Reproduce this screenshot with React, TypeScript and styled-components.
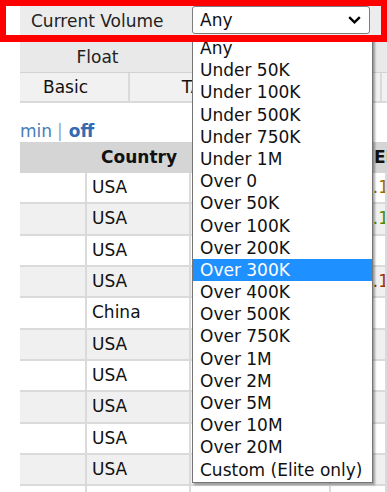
import React, { FunctionComponent } from 'react';
import styled, { createGlobalStyle } from 'styled-components';

const PageBody = createGlobalStyle`
  body {
    margin: 0;
    background: white;
    overflow: hidden;
    font-family: "DejaVu Sans", Verdana, sans-serif;
    font-size: 17px;
    color: #111;
  }
`;

const Page = styled.div`
    width: 387px;
    height: 492px;
    overflow: hidden;
`;

const TopBar = styled.div`
    position: relative;
    height: 42px;
    padding-left: 20px;
    box-sizing: border-box;
    &::after {
        content: '';
        position: absolute;
        inset: 0;
        border: 6px solid #ff0000;
        border-width: 6px 6px 7px 6px;
        pointer-events: none;
        z-index: 3;
    }
`;
const FilterRow = styled.div`
    display: flex;
    align-items: flex-start;
    height: 100%;
    background: #ececec;
`;
const Label = styled.div`
    width: 172px;
    box-sizing: border-box;
    padding-left: 11px;
    line-height: 42px;
    color: #222;
    white-space: nowrap;
`;
const SelectWrap = styled.div`
    position: relative;
    margin-top: 6px;
    width: 178px;
`;
const SelectBox = styled.div`
    height: 28px;
    box-sizing: border-box;
    border: 1px solid #7d7d7d;
    border-radius: 3px;
    background: white;
    display: flex;
    align-items: center;
    justify-content: space-between;
    padding: 0 8px 0 7px;
`;
const Options = styled.ul`
    position: absolute;
    top: 29px;
    left: 0;
    width: 179px;
    margin: 0;
    padding: 1px 0;
    list-style: none;
    background: white;
    border: 1px solid #767676;
    box-shadow: 2px 2px 2px rgba(0, 0, 0, 0.35);
    z-index: 2;
`;
const Option = styled.li<{ $active?: boolean }>`
    height: 22.2px;
    line-height: 22.2px;
    padding-left: 7px;
    white-space: nowrap;
    background: ${(p) => (p.$active ? '#1e90ff' : 'white')};
    color: ${(p) => (p.$active ? 'white' : '#111')};
`;

const FloatRow = styled.div`
    margin-left: 20px;
    height: 31px;
    box-sizing: border-box;
    background: #e9e9e9;
    border-bottom: 1px solid #d2d2d2;
    display: flex;
`;
const FloatTab = styled.div`
    width: 155px;
    text-align: center;
    line-height: 30px;
    color: #222;
`;
const SubTabs = styled.div`
    margin-left: 20px;
    height: 30px;
    box-sizing: border-box;
    background: #f1f1f1;
    border-bottom: 2px solid #dadada;
    display: flex;
`;
const SubTab = styled.div<{ $w: number; $pr?: number }>`
    width: ${(p) => p.$w}px;
    box-sizing: border-box;
    padding-right: ${(p) => p.$pr || 0}px;
    border-right: 2px solid #dadada;
    text-align: center;
    line-height: 28px;
    color: #111;
`;
const LinkRow = styled.div`
    margin-left: 20px;
    height: 39px;
    box-sizing: border-box;
    padding-top: 18px;
    line-height: 20px;
    color: #4a7bbd;
    white-space: nowrap;
`;
const Sep = styled.span`
    color: #8ea9cf;
    margin: 0 6px 0 5px;
`;
const Off = styled.b`
    color: #336bb3;
`;

const Grid = styled.div`
    margin-left: 20px;
    display: grid;
    grid-template-columns: 67px 104px 140px 1fr;
`;
const HeadRow = styled(Grid)`
    height: 31px;
    background: #d5d5d5;
    font-weight: bold;
    line-height: 31px;
`;
const HeadCell = styled.div<{ $align?: string; $pl?: number }>`
    text-align: ${(p) => p.$align || 'center'};
    padding-left: ${(p) => p.$pl || 0}px;
    white-space: nowrap;
    overflow: hidden;
`;
const Row = styled(Grid)<{ $alt: boolean }>`
    height: 31.33px;
    box-sizing: border-box;
    background: ${(p) => (p.$alt ? '#f0f0f0' : 'white')};
    border-bottom: 2px solid #dadada;
`;
const Cell = styled.div<{ $color?: string; $pl?: number }>`
    border-right: 2px solid #dadada;
    padding-left: ${(p) => p.$pl ?? 5}px;
    line-height: 29px;
    white-space: nowrap;
    overflow: hidden;
    color: ${(p) => p.$color || '#111'};
`;

const Chevron = () => (
    <svg width="13" height="8" viewBox="0 0 13 8">
        <polyline points="1.2,1.2 6.5,6.3 11.8,1.2" fill="none" stroke="#000" strokeWidth="2.4" />
    </svg>
);

const options = [
    'Any', 'Under 50K', 'Under 100K', 'Under 500K', 'Under 750K', 'Under 1M',
    'Over 0', 'Over 50K', 'Over 100K', 'Over 200K', 'Over 300K', 'Over 400K',
    'Over 500K', 'Over 750K', 'Over 1M', 'Over 2M', 'Over 5M', 'Over 10M',
    'Over 20M', 'Custom (Elite only)',
];

const rows: { country: string; eps?: string; color?: string }[] = [
    { country: 'USA', eps: '0.12', color: '#9a6c00' },
    { country: 'USA', eps: '0.15', color: '#4d8a00' },
    { country: 'USA' },
    { country: 'USA', eps: '0.13', color: '#a3300c' },
    { country: 'China' },
    { country: 'USA' },
    { country: 'USA' },
    { country: 'USA' },
    { country: 'USA' },
    { country: 'USA' },
    { country: '' },
];

const App: FunctionComponent = () => {
    return (
        <>
            <PageBody />
            <Page>
                <TopBar>
                    <FilterRow>
                        <Label>Current Volume</Label>
                        <SelectWrap>
                            <SelectBox>
                                <span>Any</span>
                                <Chevron />
                            </SelectBox>
                            <Options>
                                {options.map((o) => (
                                    <Option key={o} $active={o === 'Over 300K'}>
                                        {o}
                                    </Option>
                                ))}
                            </Options>
                        </SelectWrap>
                    </FilterRow>
                </TopBar>
                <FloatRow>
                    <FloatTab>Float</FloatTab>
                </FloatRow>
                <SubTabs>
                    <SubTab $w={110} $pr={17}>Basic</SubTab>
                    <SubTab $w={126}>TA</SubTab>
                    <SubTab $w={126}>News</SubTab>
                </SubTabs>
                <LinkRow>
                    min<Sep>|</Sep>
                    <Off>off</Off>
                </LinkRow>
                <HeadRow>
                    <HeadCell />
                    <HeadCell>Country</HeadCell>
                    <HeadCell />
                    <HeadCell $align="left" $pl={43}>EPS</HeadCell>
                </HeadRow>
                {rows.map((r, i) => (
                    <Row key={i} $alt={i % 2 === 1}>
                        <Cell />
                        <Cell>{r.country}</Cell>
                        <Cell />
                        <Cell $pl={31} $color={r.color}>{r.eps}</Cell>
                    </Row>
                ))}
            </Page>
        </>
    );
};

export default App;
